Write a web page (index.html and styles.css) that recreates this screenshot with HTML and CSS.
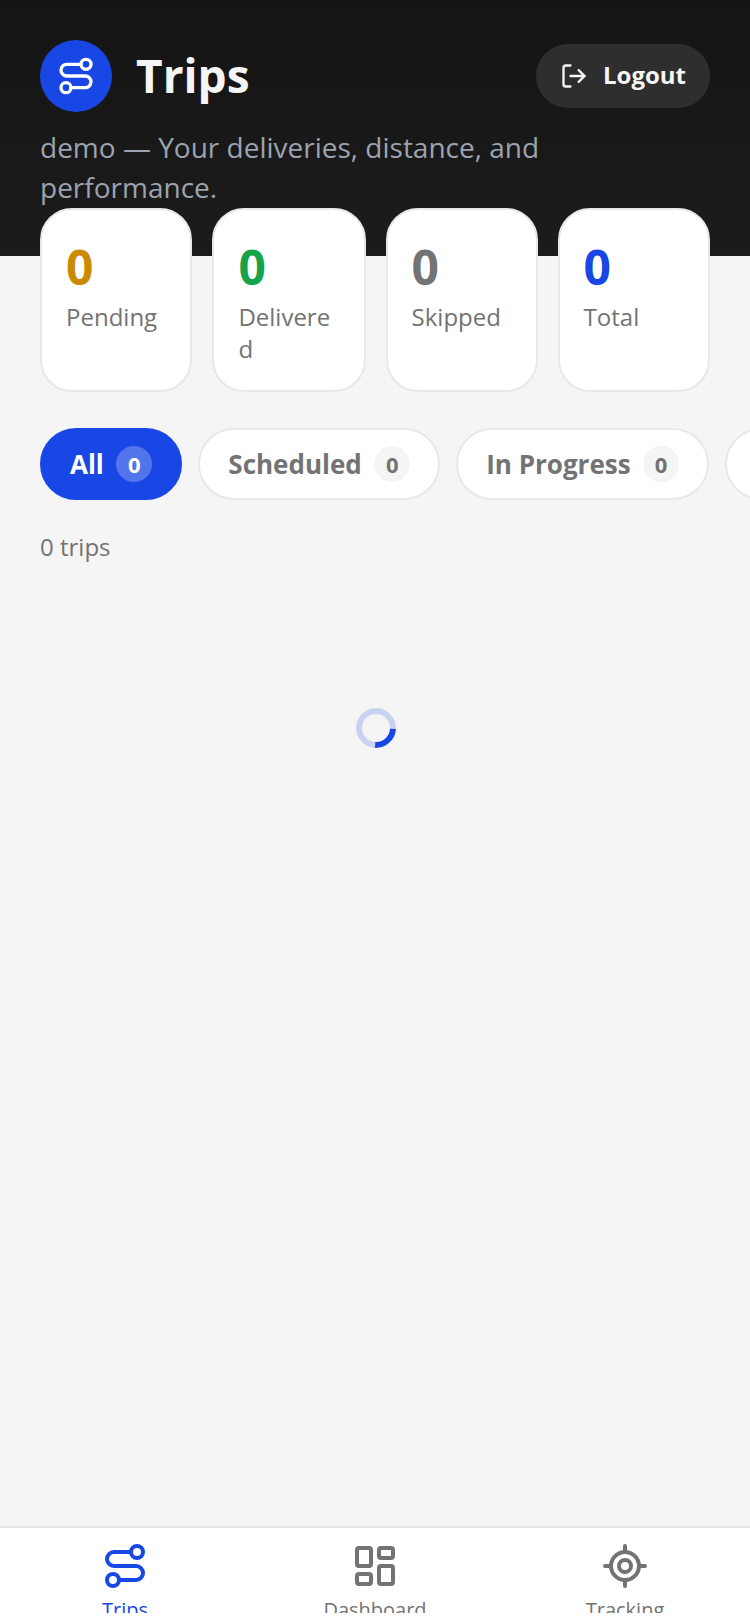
FILE: index.html
```html
<!DOCTYPE html>
<html lang="en">
<head>
  <meta charset="UTF-8" />
  <meta name="viewport" content="width=device-width, initial-scale=1.0" />
  <title>Trips</title>
  <link rel="stylesheet" href="styles.css">
</head>
<body>
  <!-- Header -->
  <header class="header">
    <div class="header-top">
      <div class="brand">
        <div class="brand-icon">
          <svg class="icon-40" viewBox="0 0 24 24"><circle cx="6" cy="19" r="3"/><path d="M9 19h8.5a3.5 3.5 0 0 0 0-7h-11a3.5 3.5 0 0 1 0-7H15"/><circle cx="18" cy="5" r="3"/></svg>
        </div>
        <h1>Trips</h1>
      </div>
      <button class="logout">
        <svg class="icon-28" viewBox="0 0 24 24"><path d="M9 21H5a2 2 0 0 1-2-2V5a2 2 0 0 1 2-2h4"/><polyline points="16 17 21 12 16 7"/><line x1="21" y1="12" x2="9" y2="12"/></svg>
        <span>Logout</span>
      </button>
    </div>
    <p class="subtitle">demo — Your deliveries, distance, and performance.</p>
  </header>

  <main class="content">
    <!-- Stats -->
    <section class="stats">
      <div class="stat-card"><div class="stat-num pending">0</div><div class="stat-label">Pending</div></div>
      <div class="stat-card"><div class="stat-num delivered">0</div><div class="stat-label">Delivered</div></div>
      <div class="stat-card"><div class="stat-num skipped">0</div><div class="stat-label">Skipped</div></div>
      <div class="stat-card"><div class="stat-num total">0</div><div class="stat-label">Total</div></div>
    </section>

    <!-- Filters -->
    <div class="filters">
      <button class="pill active">All <span class="badge">0</span></button>
      <button class="pill">Scheduled <span class="badge">0</span></button>
      <button class="pill">In Progress <span class="badge">0</span></button>
      <button class="pill">Completed <span class="badge">0</span></button>
    </div>

    <p class="trip-count">0 trips</p>

    <div class="loading"><div class="spinner"></div></div>
  </main>

  <!-- Bottom nav -->
  <nav class="bottom-nav">
    <a class="nav-item active" href="#">
      <svg class="icon-48" viewBox="0 0 24 24"><circle cx="6" cy="19" r="3"/><path d="M9 19h8.5a3.5 3.5 0 0 0 0-7h-11a3.5 3.5 0 0 1 0-7H15"/><circle cx="18" cy="5" r="3"/></svg>
      <span>Trips</span>
    </a>
    <a class="nav-item" href="#">
      <svg class="icon-48" viewBox="0 0 24 24"><rect x="3" y="3" width="7" height="9" rx="1"/><rect x="14" y="3" width="7" height="5" rx="1"/><rect x="14" y="12" width="7" height="9" rx="1"/><rect x="3" y="16" width="7" height="5" rx="1"/></svg>
      <span>Dashboard</span>
    </a>
    <a class="nav-item" href="#">
      <svg class="icon-48" viewBox="0 0 24 24"><line x1="2" y1="12" x2="5" y2="12"/><line x1="19" y1="12" x2="22" y2="12"/><line x1="12" y1="2" x2="12" y2="5"/><line x1="12" y1="19" x2="12" y2="22"/><circle cx="12" cy="12" r="7"/><circle cx="12" cy="12" r="3"/></svg>
      <span>Tracking</span>
    </a>
  </nav>
</body>
</html>
```

FILE: styles.css
```css
* {
  margin: 0;
  padding: 0;
  box-sizing: border-box;
}

body {
  font-family: 'Open Sans', sans-serif;
  background: #f5f5f5;
  height: 100vh;
  display: flex;
  flex-direction: column;
  overflow: hidden;
}

svg {
  fill: none;
  stroke: currentColor;
  stroke-width: 2;
  stroke-linecap: round;
  stroke-linejoin: round;
  flex-shrink: 0;
}

.icon-28 {
  width: 28px;
  height: 28px;
}

.icon-40 {
  width: 40px;
  height: 40px;
}

.icon-48 {
  width: 48px;
  height: 48px;
}

/* Header */
.header {
  background: linear-gradient(to bottom, #141414, #1c1c1c);
  height: 256px;
  padding: 40px 40px 0;
  flex-shrink: 0;
}

.header-top {
  display: flex;
  justify-content: space-between;
  align-items: center;
}

.brand {
  display: flex;
  align-items: center;
  gap: 24px;
}

.brand-icon {
  width: 72px;
  height: 72px;
  border-radius: 50%;
  background: #1847e6;
  color: #fff;
  display: flex;
  justify-content: center;
  align-items: center;
}

.brand h1 {
  padding-bottom: 2px;
  font-size: 46px;
  font-weight: 700;
  color: #f5f5f5;
}

.logout {
  display: flex;
  align-items: center;
  gap: 15px;
  height: 64px;
  padding: 0 24px;
  border: none;
  border-radius: 32px;
  background: #2e2e2e;
  color: #f5f5f5;
  font-family: inherit;
  font-size: 24px;
  font-weight: 700;
}

.logout span {
  margin-bottom: 4px;
}

.subtitle {
  margin-top: 15px;
  max-width: 510px;
  font-size: 28px;
  line-height: 40px;
  color: #9ca3af;
}

/* Main Content */
.content {
  flex: 1;
  min-height: 0;
  padding: 0 40px;
}

.stats {
  position: relative;
  display: grid;
  grid-template-columns: 152.4fr 153.2fr 152fr 152.4fr;
  gap: 20px;
  margin-top: -48px;
}

.stat-card {
  min-width: 0;
  background: #fff;
  border: 2px solid #e8e8e8;
  border-radius: 32px;
  padding: 24px 24px 25px;
}

.stat-num {
  font-size: 48px;
  font-weight: 700;
}

.stat-num.pending {
  color: #ca8a04;
}

.stat-num.delivered {
  color: #16a34a;
}

.stat-num.skipped {
  color: #737373;
}

.stat-num.total {
  color: #1847e6;
}

.stat-label {
  margin-top: 2px;
  font-size: 24px;
  line-height: 32px;
  color: #737373;
  overflow-wrap: anywhere;
}

.filters {
  display: flex;
  gap: 16px;
  margin-top: 36px;
  width: max-content;
}

.pill {
  display: flex;
  align-items: center;
  gap: 12.5px;
  height: 72px;
  padding: 0 28px;
  border: 2px solid #e8e8e8;
  border-radius: 36px;
  background: #fff;
  color: #737373;
  font-family: inherit;
  font-size: 26px;
  font-weight: 700;
}

.pill.active {
  background: #1847e6;
  border-color: #1847e6;
  color: #fff;
}

.badge {
  display: flex;
  justify-content: center;
  align-items: center;
  width: 36px;
  height: 36px;
  border-radius: 50%;
  background: #f5f5f5;
  font-size: 22px;
}

.pill.active .badge {
  background: rgba(255, 255, 255, 0.25);
}

.trip-count {
  margin-top: 29px;
  font-size: 24px;
  line-height: 36px;
  color: #737373;
}

.loading {
  display: flex;
  justify-content: center;
  margin-top: 143px;
  padding-left: 2px;
}

.spinner {
  width: 40px;
  height: 40px;
  border: 6px solid rgba(24, 71, 230, 0.2);
  border-right-color: #1847e6;
  border-radius: 50%;
  transform: rotate(48deg);
}

/* Bottom nav */
.bottom-nav {
  display: flex;
  flex-shrink: 0;
  height: 98px;
  padding-bottom: 11px;
  background: #fff;
  border-top: 2px solid #e5e5e5;
}

.nav-item {
  flex: 1;
  display: flex;
  flex-direction: column;
  align-items: center;
  padding-top: 14px;
  overflow: hidden;
  color: #737373;
  font-size: 20px;
  text-decoration: none;
}

/* label sits past the bar's inner edge, so it gets clipped */
.nav-item span {
  margin-top: 6px;
  flex-shrink: 0;
}

.nav-item.active {
  color: #1847e6;
}
```
